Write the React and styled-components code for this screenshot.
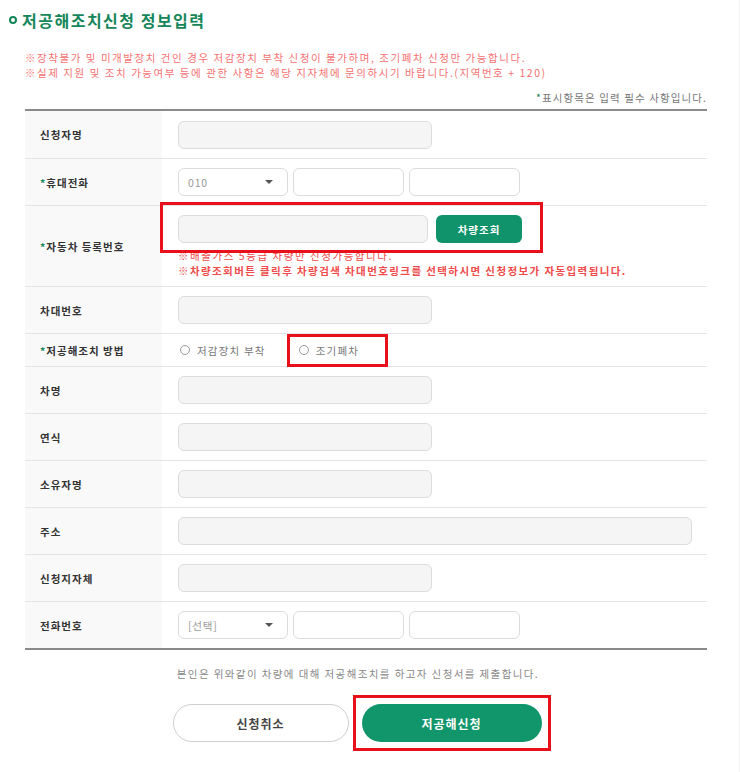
import React from 'react';
import styled, { createGlobalStyle } from 'styled-components';

const GlobalStyle = createGlobalStyle`
  html, body {
    margin: 0;
    padding: 0;
    background: #fff;
  }
  body {
    font-family: "Noto Sans CJK KR", "Noto Sans", sans-serif;
    color: #333;
  }
`;

const Page = styled.div`
  width: 740px;
  height: 772px;
  box-sizing: border-box;
  padding: 10px 32px 0 25px;
  border-right: 1px solid #f1f1f1;
  position: relative;
`;

const Title = styled.h2`
  margin: 0 0 0 -16px;
  display: flex;
  align-items: center;
  gap: 5px;
  font-size: 16px;
  font-weight: 700;
  color: #16865a;
  height: 20px;
  letter-spacing: 1.5px;
`;

const Ring = styled.span`
  width: 4px;
  height: 4px;
  border: 2px solid #16865a;
  border-radius: 50%;
`;

const Notices = styled.div`
  margin-top: 21px;
  display: flex;
  flex-direction: column;
  gap: 2px;
`;

const Notice = styled.p`
  margin: 0;
  font-size: 10.5px;
  line-height: 13px;
  color: ${(p) => (p.$strong ? '#f04a4a' : '#f57272')};
  letter-spacing: 1.55px;
  white-space: nowrap;
`;

const Required = styled.p`
  margin: 12px 0 0;
  text-align: right;
  font-size: 10.5px;
  line-height: 13px;
  color: #777;
  letter-spacing: 1.1px;
`;

const Star = styled.span`
  color: #16865a;
`;

const Table = styled.div`
  margin-top: 5px;
  border-top: 2px solid #8a8a8a;
  border-bottom: 2px solid #8a8a8a;
`;

const Row = styled.div`
  display: grid;
  grid-template-columns: 137px 1fr;
  height: ${(p) => p.$h || 47}px;
  border-top: ${(p) => (p.$first ? 'none' : '1px solid #e4e4e4')};
  box-sizing: border-box;
`;

const Label = styled.div`
  background: #f9f9f9;
  display: flex;
  align-items: center;
  padding-left: 15px;
  font-size: 10.5px;
  font-weight: 700;
  color: #333;
  letter-spacing: 1px;
`;

const Cell = styled.div`
  position: relative;
  display: flex;
  flex-direction: ${(p) => (p.$col ? 'column' : 'row')};
  justify-content: ${(p) => (p.$col ? 'center' : 'flex-start')};
  align-items: ${(p) => (p.$col ? 'flex-start' : 'center')};
  gap: 5px;
  padding-left: 16px;
`;

const Input = styled.div`
  width: ${(p) => p.$w}px;
  height: 28px;
  box-sizing: border-box;
  border: 1px solid #dcdcdc;
  border-radius: 6px;
  background: ${(p) => (p.$white ? '#fff' : '#f5f5f5')};
`;

const Select = styled.div`
  width: 110px;
  height: 28px;
  box-sizing: border-box;
  border: 1px solid #dcdcdc;
  border-radius: 6px;
  background: #fff;
  display: flex;
  align-items: center;
  justify-content: space-between;
  padding: 0 14px 0 9px;
  font-size: 10.5px;
  letter-spacing: 0.8px;
  color: #999;
`;

const Caret = styled.span`
  width: 0;
  height: 0;
  border-left: 4px solid transparent;
  border-right: 4px solid transparent;
  border-top: 4px solid #555;
`;

const InlineGroup = styled.div`
  display: flex;
  align-items: center;
  gap: 8px;
`;

const SearchButton = styled.button`
  width: 86px;
  height: 28px;
  border: none;
  border-radius: 6px;
  background: #10926a;
  color: #fff;
  font-family: inherit;
  font-size: 10.5px;
  font-weight: 700;
  letter-spacing: 1px;
`;

const SubNotes = styled.div`
  display: flex;
  flex-direction: column;
  gap: 2px;
  margin-top: 1px;
`;

const Radios = styled.div`
  display: flex;
  align-items: center;
  gap: 33px;
  padding-left: 2px;
`;

const RadioItem = styled.label`
  display: flex;
  align-items: center;
  gap: 7px;
  font-size: 10.5px;
  letter-spacing: 1.2px;
  color: #777;
`;

const RadioDot = styled.span`
  width: 8px;
  height: 8px;
  border: 1px solid #999;
  border-radius: 50%;
`;

const Highlight = styled.div`
  position: absolute;
  border: 3px solid #e8101a;
  pointer-events: none;
`;

const Consent = styled.p`
  margin: 16px 0 0;
  text-align: center;
  font-size: 10.5px;
  letter-spacing: 1.4px;
  color: #888;
  padding-right: 16px;
`;

const Buttons = styled.div`
  margin-top: 23px;
  display: flex;
  justify-content: center;
  gap: 13px;
  padding-right: 18px;
`;

const PillButton = styled.button`
  position: relative;
  width: ${(p) => (p.$primary ? 180 : 176)}px;
  height: 38px;
  border-radius: 19px;
  box-sizing: border-box;
  border: ${(p) => (p.$primary ? 'none' : '1.5px solid #cfcfcf')};
  background: ${(p) => (p.$primary ? '#10966a' : '#fff')};
  color: ${(p) => (p.$primary ? '#fff' : '#444')};
  font-family: inherit;
  font-size: 12px;
  font-weight: 700;
  letter-spacing: 1px;
`;

const Field = ({ label, required, children, h, first, col }) => (
  <Row $h={h} $first={first}>
    <Label>
      {required && <Star>*</Star>}
      {label}
    </Label>
    <Cell $col={col}>{children}</Cell>
  </Row>
);

const PhoneGroup = ({ placeholder }) => (
  <InlineGroup style={{ gap: 5 }}>
    <Select>
      {placeholder}
      <Caret />
    </Select>
    <Input $w={111} $white />
    <Input $w={111} $white />
  </InlineGroup>
);

export default function App() {
  return (
    <Page>
      <GlobalStyle />
      <Title>
        <Ring />
        저공해조치신청 정보입력
      </Title>
      <Notices>
        <Notice>※장착불가 및 미개발장치 건인 경우 저감장치 부착 신청이 불가하며, 조기폐차 신청만 가능합니다.</Notice>
        <Notice>※실제 지원 및 조치 가능여부 등에 관한 사항은 해당 지자체에 문의하시기 바랍니다.(지역번호 + 120)</Notice>
      </Notices>
      <Required>
        <Star>*</Star>표시항목은 입력 필수 사항입니다.
      </Required>
      <Table>
        <Field label="신청자명" first>
          <Input $w={254} />
        </Field>
        <Field label="휴대전화" required>
          <PhoneGroup placeholder="010" />
        </Field>
        <Field label="자동차 등록번호" required h={81} col>
          <InlineGroup>
            <Input $w={250} />
            <SearchButton>차량조회</SearchButton>
          </InlineGroup>
          <SubNotes>
            <Notice $strong>※배출가스 5등급 차량만 신청가능합니다.</Notice>
            <Notice $strong style={{ fontWeight: 700, letterSpacing: '1.4px' }}>
              ※차량조회버튼 클릭후 차량검색 차대번호링크를 선택하시면 신청정보가 자동입력됩니다.
            </Notice>
          </SubNotes>
          <Highlight style={{ left: -2, top: -4, width: 377, height: 45 }} />
        </Field>
        <Field label="차대번호">
          <Input $w={254} />
        </Field>
        <Field label="저공해조치 방법" required h={33}>
          <Radios>
            <RadioItem>
              <RadioDot />
              저감장치 부착
            </RadioItem>
            <RadioItem>
              <RadioDot />
              조기폐차
            </RadioItem>
          </Radios>
          <Highlight style={{ left: 125, top: 0, width: 95, height: 27 }} />
        </Field>
        <Field label="차명">
          <Input $w={254} />
        </Field>
        <Field label="연식">
          <Input $w={254} />
        </Field>
        <Field label="소유자명">
          <Input $w={254} />
        </Field>
        <Field label="주소">
          <Input $w={514} />
        </Field>
        <Field label="신청지자체">
          <Input $w={254} />
        </Field>
        <Field label="전화번호">
          <PhoneGroup placeholder="[선택]" />
        </Field>
      </Table>
      <Consent>본인은 위와같이 차량에 대해 저공해조치를 하고자 신청서를 제출합니다.</Consent>
      <Buttons>
        <PillButton>신청취소</PillButton>
        <PillButton $primary>
          저공해신청
          <Highlight style={{ left: -9, top: -9, width: 192, height: 50 }} />
        </PillButton>
      </Buttons>
    </Page>
  );
}
